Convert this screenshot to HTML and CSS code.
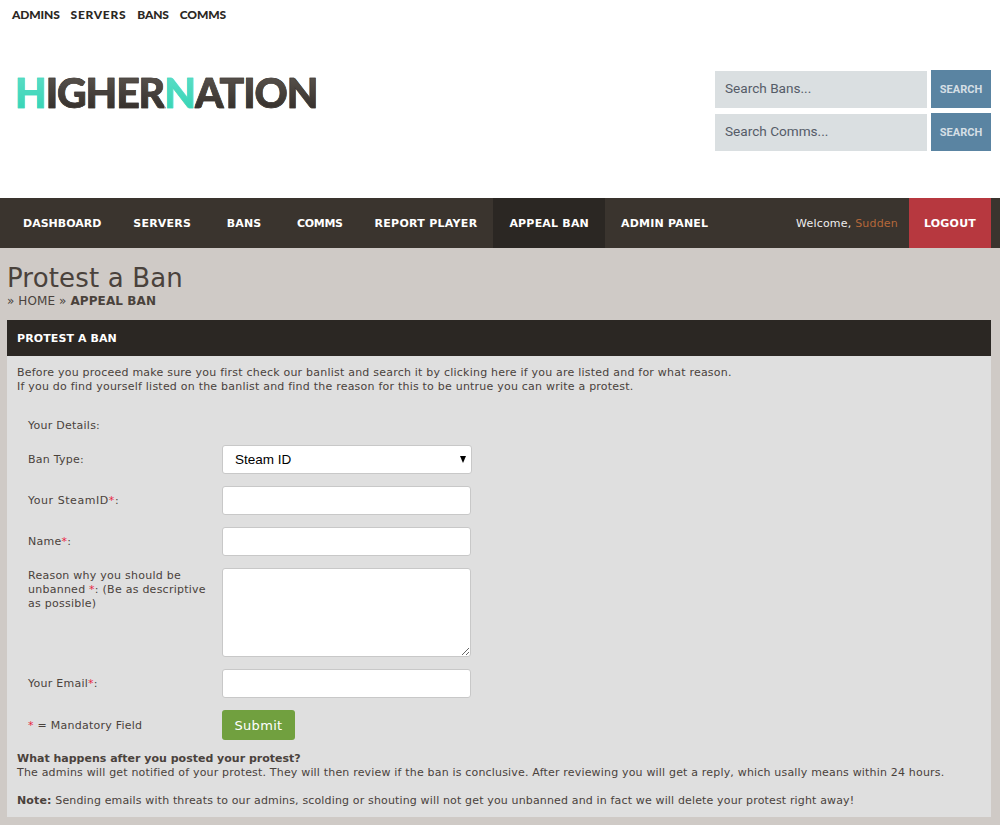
FILE: index.html
```html
<!DOCTYPE html>
<html>
<head>
    <title>Protest a Ban</title>
    <link rel="stylesheet" href="styles.css">
</head>
<body>
<div class="topbar">
    <a href="#">ADMINS</a>
    <a href="#" class="top-servers">SERVERS</a>
    <a href="#">BANS</a>
    <a href="#">COMMS</a>
</div>

<div class="header">
    <div class="logo"><span class="logo-teal">H</span><span class="logo-dark">IGHER</span><span class="logo-teal">N</span><span class="logo-dark">ATION</span></div>
    <div class="search">
        <form class="search-row">
            <input type="text" placeholder="Search Bans...">
            <button type="button">SEARCH</button>
        </form>
        <form class="search-row">
            <input type="text" placeholder="Search Comms...">
            <button type="button">SEARCH</button>
        </form>
    </div>
</div>

<div class="nav">
    <a href="#" class="nav-dash">DASHBOARD</a>
    <a href="#">SERVERS</a>
    <a href="#" class="nav-bans">BANS</a>
    <a href="#" class="nav-comms">COMMS</a>
    <a href="#" class="nav-report">REPORT PLAYER</a>
    <a href="#" class="active">APPEAL BAN</a>
    <a href="#">ADMIN PANEL</a>
    <span class="welcome">Welcome, <span class="username">Sudden</span></span>
    <a href="#" class="logout">LOGOUT</a>
</div>

<div class="content">
    <h1>Protest a Ban</h1>
    <div class="breadcrumb">&raquo; HOME &raquo; <b>APPEAL BAN</b></div>

    <div class="panel">
        <div class="panel-title">PROTEST A BAN</div>
        <div class="panel-body">
            <p class="intro">Before you proceed make sure you first check our banlist and search it by clicking here if you are listed and for what reason.<br>If you do find yourself listed on the banlist and find the reason for this to be untrue you can write a protest.</p>

            <form class="protest">
                <div class="details">Your Details:</div>
                <div class="row">
                    <label>Ban Type:</label>
                    <div class="select-wrap">
                        <select><option>Steam ID</option></select>
                    </div>
                </div>
                <div class="row">
                    <label class="label-wide">Your SteamID<span class="req">*</span>:</label>
                    <input type="text">
                </div>
                <div class="row">
                    <label>Name<span class="req">*</span>:</label>
                    <input type="text">
                </div>
                <div class="row row-top">
                    <label>Reason why you should be unbanned <span class="req">*</span>: (Be as descriptive as possible)</label>
                    <textarea></textarea>
                </div>
                <div class="row">
                    <label>Your Email<span class="req">*</span>:</label>
                    <input type="text">
                </div>
                <div class="row">
                    <label class="label-mandatory"><span class="req">*</span> = Mandatory Field</label>
                    <button type="button" class="submit">Submit</button>
                </div>
            </form>

            <p class="after"><b>What happens after you posted your protest?</b><br>The admins will get notified of your protest. They will then review if the ban is conclusive. After reviewing you will get a reply, which usally means within 24 hours.</p>
            <p class="note"><b>Note:</b> Sending emails with threats to our admins, scolding or shouting will not get you unbanned and in fact we will delete your protest right away!</p>
        </div>
    </div>
</div>
</body>
</html>
```

FILE: styles.css
```css
body {
    font-family: "DejaVu Sans", sans-serif;
    font-size: 11px;
    background-color: #cfcac6;
    color: #4a423c;
    margin: 0;
    height: 825px;
    overflow: hidden;
}

a {
    text-decoration: none;
}

.topbar {
    background-color: #fff;
    height: 29px;
    padding-left: 12px;
    display: flex;
    gap: 11px;
    align-items: center;
}

.topbar a {
    font-family: "Lato", sans-serif;
    font-weight: 900;
    font-size: 12px;
    letter-spacing: -0.15px;
    color: #2b2723;
}

.topbar a.top-servers {
    letter-spacing: 0.7px;
}

.header {
    background-color: #fff;
    height: 169px;
    display: flex;
    justify-content: space-between;
    padding: 0 9px 0 15px;
}

.logo {
    font-family: "Lato", sans-serif;
    font-weight: 900;
    font-size: 41px;
    line-height: 41px;
    margin-top: 43px;
    letter-spacing: -1.1px;
}

.logo-teal {
    background: linear-gradient(#62dfc9, #2fd3b3);
    -webkit-background-clip: text;
    background-clip: text;
    color: transparent;
    -webkit-text-stroke: 0.6px #45d8bd;
}

.logo-dark {
    background: linear-gradient(#5f5953, #2e2925);
    -webkit-background-clip: text;
    background-clip: text;
    color: transparent;
    -webkit-text-stroke: 0.6px #3f3934;
}

.search {
    margin-top: 41px;
}

.search-row {
    display: flex;
    align-items: flex-end;
    gap: 4px;
    height: 38px;
    margin-bottom: 5px;
}

.search-row input {
    width: 212px;
    height: 37px;
    box-sizing: border-box;
    border: none;
    padding: 0 10px 3px;
    background-color: #dadfe1;
    font-family: "Roboto", sans-serif;
    font-size: 13.6px;
}

.search-row input::placeholder {
    color: #555c68;
    opacity: 1;
}

.search-row button {
    width: 60px;
    height: 38px;
    border: none;
    padding: 0;
    background-color: #5a84a2;
    color: #d5dfe5;
    font-family: "Roboto", sans-serif;
    font-weight: 700;
    font-size: 11px;
}

.nav {
    background-color: #3a342e;
    height: 50px;
    padding: 0 9px 0 7px;
    display: flex;
    align-items: stretch;
}

.nav a {
    display: flex;
    align-items: center;
    justify-content: center;
    padding: 0 16px;
    color: #fff;
    font-weight: 700;
    font-size: 11px;
    letter-spacing: 0.2px;
}

.nav a.nav-dash {
    letter-spacing: 0;
}

.nav a.nav-bans {
    min-width: 74px;
    box-sizing: border-box;
}

.nav a.nav-comms {
    letter-spacing: -0.35px;
}

.nav a.nav-report {
    letter-spacing: 0.28px;
}

.nav a.active {
    background-color: #2b2723;
}

.nav a.logout {
    background-color: #b7383f;
    width: 82px;
    padding: 0;
    box-sizing: border-box;
}

.welcome {
    margin-left: auto;
    margin-right: 11px;
    align-self: center;
    color: #eee;
    letter-spacing: 0.2px;
}

.username {
    color: #b5683a;
}

.content {
    padding: 0 9px 0 7px;
}

h1 {
    font-weight: normal;
    font-size: 26px;
    letter-spacing: 0.15px;
    line-height: 32px;
    margin: 14px 0 0;
}

.breadcrumb {
    font-size: 12px;
    letter-spacing: 0.1px;
    line-height: 14px;
    margin: 0 0 12px;
}

.panel-title {
    background-color: #2b2723;
    color: #fff;
    font-weight: 700;
    height: 36px;
    line-height: 37px;
    padding-left: 10px;
    letter-spacing: 0.1px;
}

.panel-body {
    background-color: #dfdfdf;
    padding: 10px;
    height: 461px;
    box-sizing: border-box;
    line-height: 14px;
    letter-spacing: 0.25px;
}

.panel-body p {
    margin: 0;
}

.panel-body .intro {
    letter-spacing: 0.22px;
}

.protest {
    padding: 0 11px;
    margin-top: 25px;
}

.details {
    margin-bottom: 12px;
}

.row {
    display: flex;
    align-items: center;
    margin-bottom: 12px;
}

.row-top {
    align-items: flex-start;
}

.row-top label {
    padding-top: 1px;
}

.row label {
    width: 194px;
    padding-right: 8px;
    box-sizing: border-box;
    flex: none;
}

.row .label-wide {
    letter-spacing: 0.55px;
}

.row .label-mandatory {
    padding-top: 2px;
}

.req {
    color: #e8253f;
}

.row input, .row textarea {
    width: 249px;
    height: 29px;
    box-sizing: border-box;
    background-color: #fff;
    border: 1px solid #c8c8c8;
    border-radius: 3px;
    padding: 4px 8px;
    margin: 0;
}

.row textarea {
    height: 89px;
    display: block;
}

.select-wrap {
    position: relative;
    width: 250px;
    height: 29px;
}

.select-wrap::after {
    content: "";
    position: absolute;
    right: 6px;
    top: 11px;
    border-left: 3px solid transparent;
    border-right: 3px solid transparent;
    border-top: 7px solid #000;
}

.row select {
    appearance: none;
    width: 250px;
    height: 29px;
    box-sizing: border-box;
    background-color: #fff;
    border: 1px solid #c8c8c8;
    border-radius: 3px;
    padding: 0 12px;
    font-family: "Liberation Sans", sans-serif;
    font-size: 13.5px;
    color: #000;
}

.submit {
    width: 73px;
    height: 30px;
    border: none;
    border-radius: 3px;
    background-color: #71a03f;
    color: #fff;
    font-family: "DejaVu Sans", sans-serif;
    font-size: 13px;
    font-weight: 400;
    letter-spacing: 0.3px;
    padding: 0;
}

.panel-body .after {
    letter-spacing: 0.18px;
}

.panel-body .after b {
    letter-spacing: 0;
}

.panel-body .note {
    margin-top: 14px;
    letter-spacing: 0.15px;
}
```
